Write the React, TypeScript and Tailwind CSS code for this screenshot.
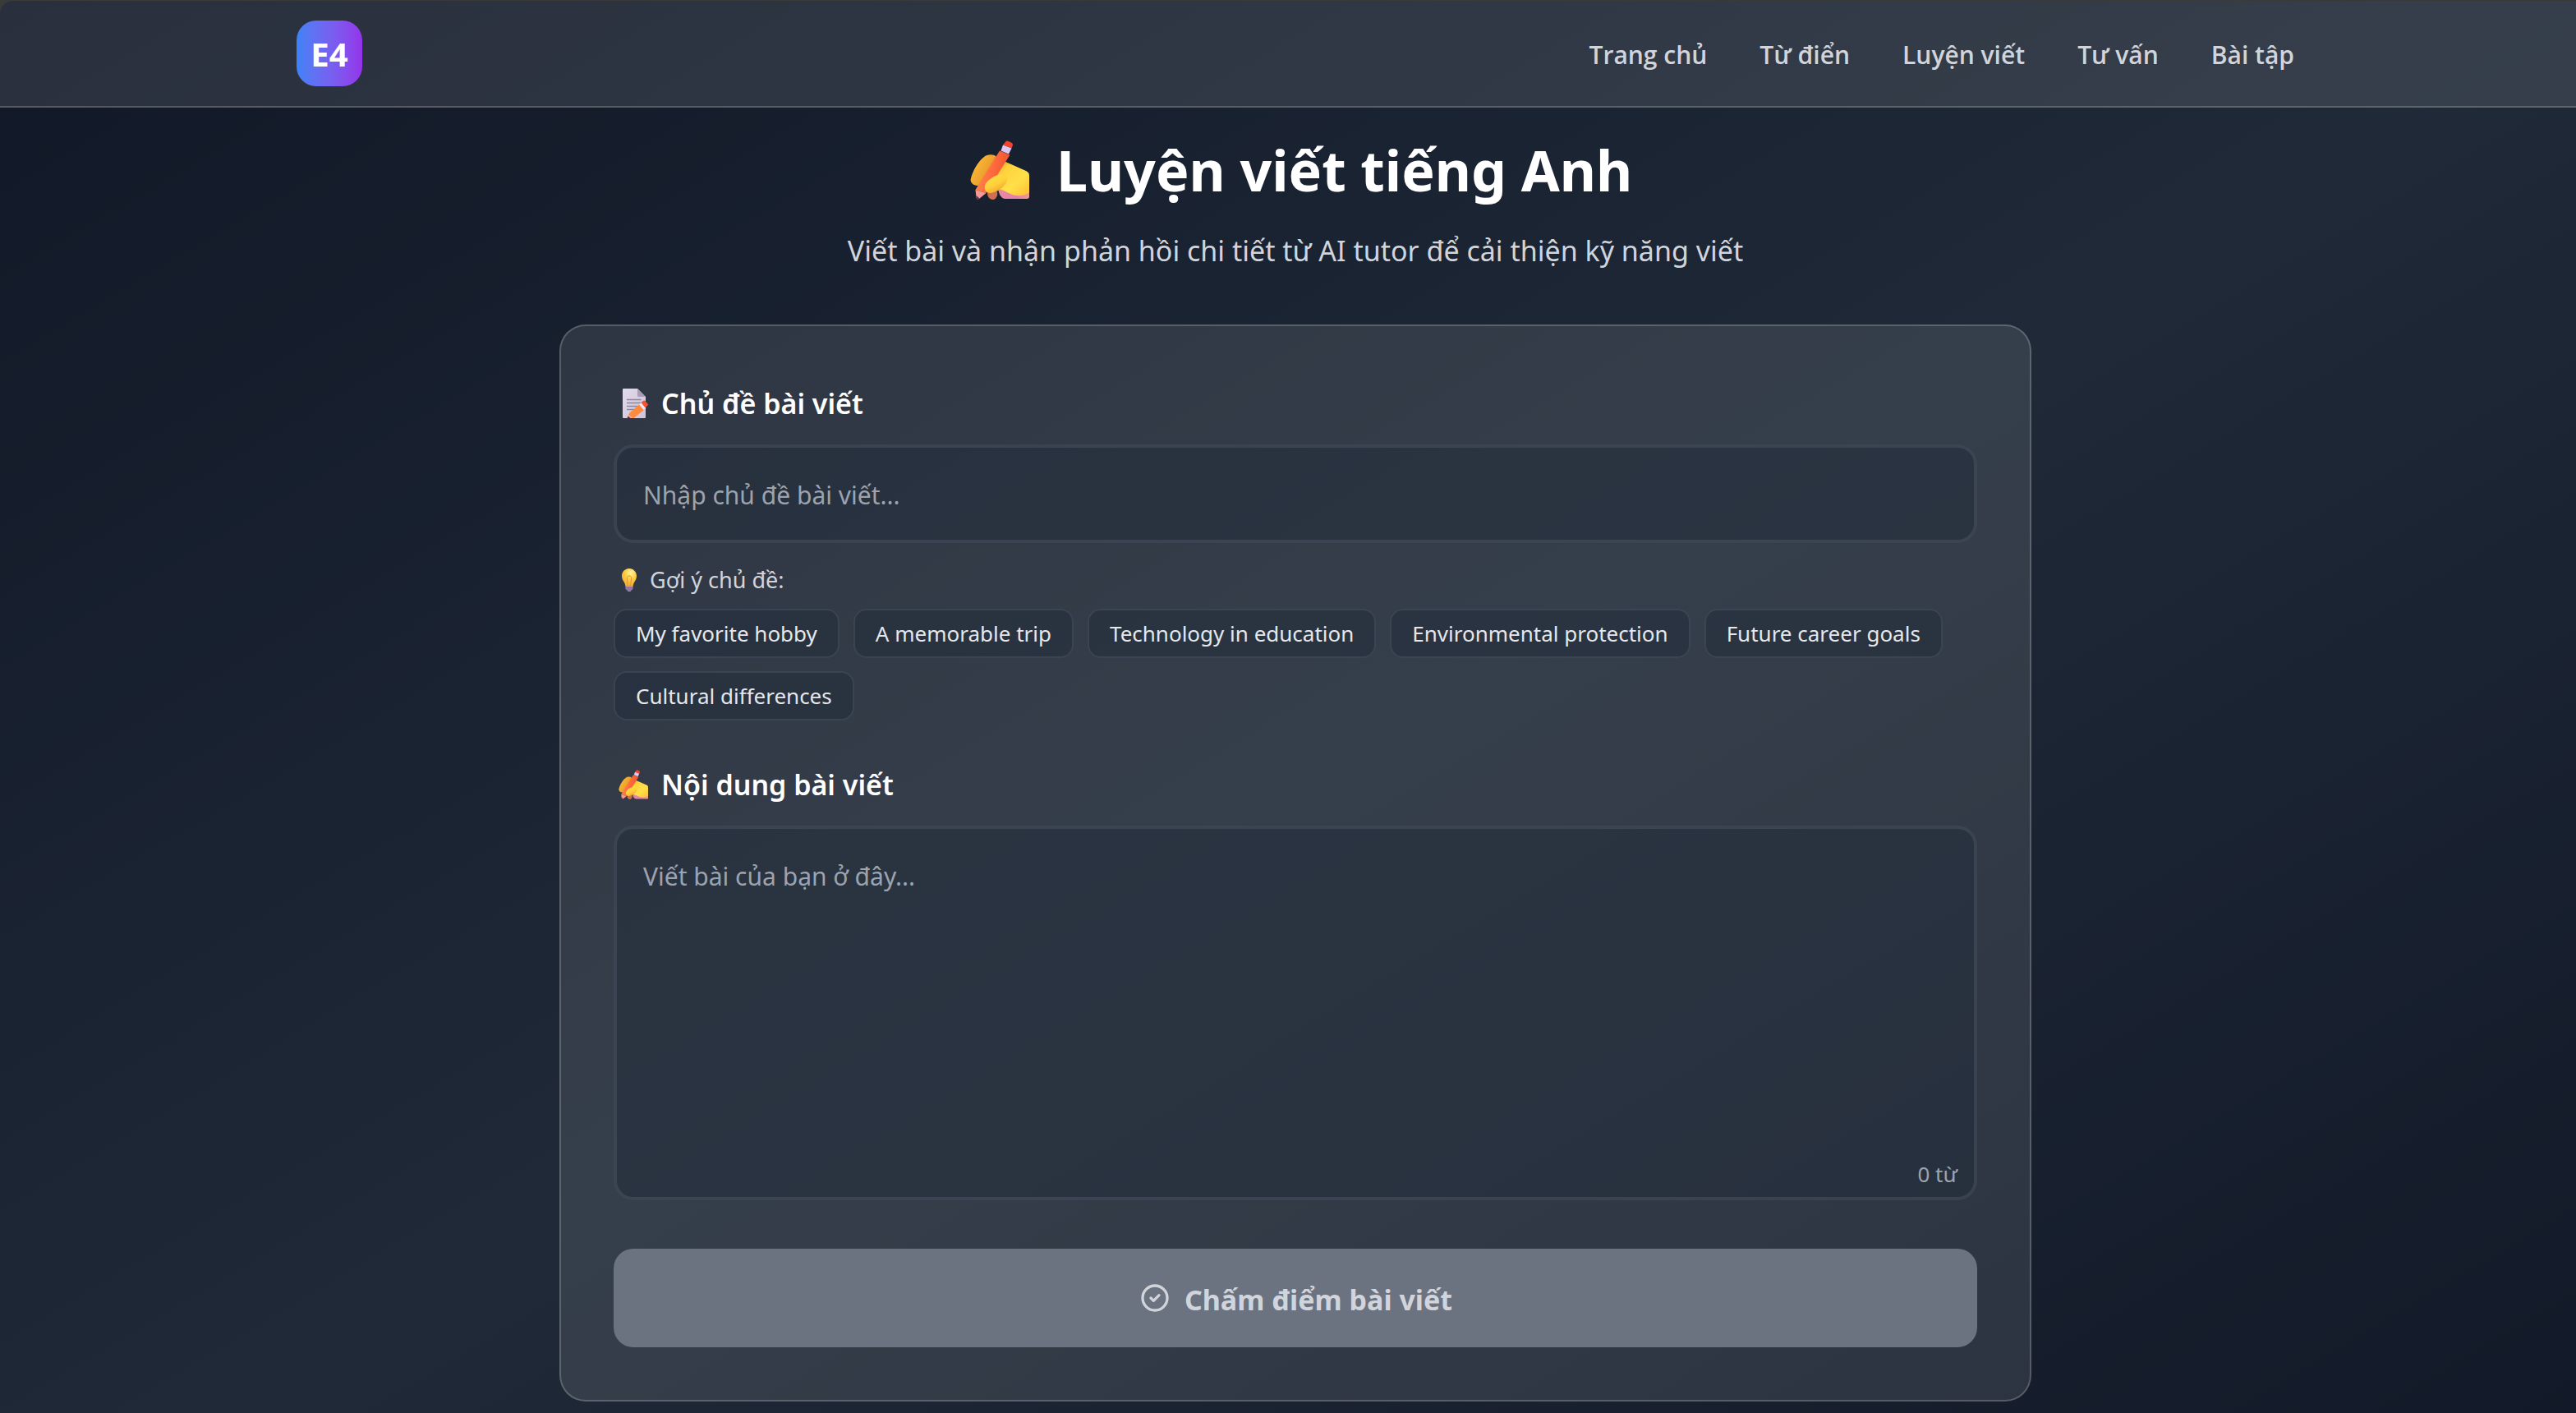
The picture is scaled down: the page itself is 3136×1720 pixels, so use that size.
import { useId, useState } from "react";

const NAV_LINKS = ["Trang chủ", "Từ điển", "Luyện viết", "Tư vấn", "Bài tập"];

const TOPICS = [
  "My favorite hobby",
  "A memorable trip",
  "Technology in education",
  "Environmental protection",
  "Future career goals",
  "Cultural differences",
];

function WritingHand({ className }: { className: string }) {
  const id = useId();
  return (
    <svg viewBox="0 0 72 72" className={className} aria-hidden="true">
      <defs>
        <linearGradient id={`${id}finger`} x1="0" y1="0" x2="1" y2="0.6">
          <stop offset="0" stopColor="#FFC83A" />
          <stop offset="0.6" stopColor="#EFA22E" />
          <stop offset="1" stopColor="#B8692F" />
        </linearGradient>
        <linearGradient id={`${id}palm`} x1="0" y1="0.2" x2="0.8" y2="1">
          <stop offset="0" stopColor="#C98A2B" />
          <stop offset="0.3" stopColor="#FFD23C" />
          <stop offset="0.7" stopColor="#FFE04A" />
          <stop offset="1" stopColor="#FFC83A" />
        </linearGradient>
        <linearGradient id={`${id}pink`} x1="0" y1="0" x2="1" y2="0">
          <stop offset="0" stopColor="#E98BA0" />
          <stop offset="0.6" stopColor="#E87FA8" />
          <stop offset="1" stopColor="#F39A8A" />
        </linearGradient>
        <linearGradient id={`${id}pencil`} x1="0" y1="0.4" x2="1" y2="0.6">
          <stop offset="0" stopColor="#FF8A4C" />
          <stop offset="0.5" stopColor="#FF6A3C" />
          <stop offset="1" stopColor="#E8502F" />
        </linearGradient>
        <linearGradient id={`${id}thumb`} x1="0" y1="0" x2="0.6" y2="1">
          <stop offset="0" stopColor="#FFE24A" />
          <stop offset="0.6" stopColor="#FFD03A" />
          <stop offset="1" stopColor="#F0A32C" />
        </linearGradient>
      </defs>
      <path
        d="M17 20c3-3 8-3.500 13-2l6 6-14 28-9 2c-7 3-14-2-12-8 2-8 8-20 16-26z"
        fill={`url(#${id}finger)`}
      />
      <path d="M21 64c0-3 3-5 7-5s6 4 5 8c-1 3-3 5-5.500 5-4 0-6.500-4-6.500-8z" fill="#CF6E50" />
      <path d="M34 56h38v12c0 2-1 3-3 3H43c-6 0-9-8-9-15z" fill={`url(#${id}pink)`} />
      <path
        d="M31 22l10 3 27 12c3 1.500 4 3 4 6v20c-7 6-18 5-25 1-8-4-14-6-22-8z"
        fill={`url(#${id}palm)`}
      />
      <path
        d="M36 12.500l12.500 5L19.500 64 6.500 60z"
        fill={`url(#${id}pencil)`}
      />
      <path d="M42.500 2.500C43.500 0 45 0 47 1l3 1.500c2 1 2.500 2.500 1.500 4.500l-1 2.500-10.500-4z" fill="#F2432C" />
      <path d="M40 5.500l10.500 4-3.500 7-9.500-4z" fill="#DDC8F5" />
      <path d="M6.500 60l13 4-8.500 7c-2 1-3.500 0-3.500-2z" fill="#F79A97" />
      <path d="M7.500 67l4 3.500-1.500 1c-1.500.5-2.500 0-2.500-1.500z" fill="#6B2B55" />
      <path
        d="M18 55c1-6 12-13 20-14 5-.5 9 3 7 8-3 8-12 14-20 15-5 .5-8-4-7-9z"
        fill={`url(#${id}thumb)`}
      />
    </svg>
  );
}

function MemoIcon({ className }: { className: string }) {
  const id = useId();
  return (
    <svg viewBox="0 0 32 36" className={className} aria-hidden="true">
      <defs>
        <linearGradient id={`${id}page`} x1="0" y1="0" x2="1" y2="1">
          <stop offset="0" stopColor="#E2DAE9" />
          <stop offset="1" stopColor="#CFC3DA" />
        </linearGradient>
        <clipPath id={`${id}clip`}>
          <rect width="32" height="36" />
        </clipPath>
      </defs>
      <g clipPath={`url(#${id}clip)`}>
        <path d="M2 0h17l10 10v24.500c0 1-.5 1.500-1.500 1.500h-25C1.500 36 1 35.500 1 34.500V1.500C1 .5 1.500 0 2 0z" fill={`url(#${id}page)`} />
        <path d="M19 0l10 10h-8c-1.500 0-2-.5-2-2z" fill="#A99DB8" />
        <path d="M6 13.500h17.500M6 17.500h17.500M6 21.500h13M6 25.500h10" stroke="#8D869B" strokeWidth="1.400" />
        <path d="M21.500 19l6 6.500L14.500 36 7 37l2-7z" fill="#FF8A3C" />
        <path d="M8.500 31.500l5 4.500-6.500 1z" fill="#F7A98C" />
        <path d="M7.500 33.500l3.500 3H6.500z" fill="#5B2148" />
        <path d="M21 19.500l2.500-2.500 6 6.500-3 2.500z" fill="#F1E6F5" />
        <path d="M23.500 17l2.500-2c1-.8 2-.5 2.500 0l3 3.500c.6 1 .5 1.800-.5 2.500l-2.500 2.200z" fill="#F4532F" />
      </g>
    </svg>
  );
}

function BulbIcon({ className }: { className: string }) {
  const id = useId();
  return (
    <svg viewBox="0 0 18 28" className={className} aria-hidden="true">
      <defs>
        <radialGradient id={`${id}glass`} cx="0.6" cy="0.25" r="0.8">
          <stop offset="0" stopColor="#FFF3A8" />
          <stop offset="0.4" stopColor="#FFD24A" />
          <stop offset="1" stopColor="#F2A52E" />
        </radialGradient>
      </defs>
      <path d="M9 0c5 0 9 4 9 9 0 3.500-1.500 5.500-3 8-.8 1.500-1.200 3-1.500 5h-9c-.3-2-.7-3.500-1.500-5-1.500-2.500-3-4.500-3-8 0-5 4-9 9-9z" fill={`url(#${id}glass)`} />
      <path d="M7.500 21.500L6.500 13c-.8-2.500.5-4 2.500-4s3.300 1.500 2.500 4l-1 8.500" fill="none" stroke="#E8912A" strokeWidth="1" />
      <path d="M4.500 21.500h9V24c0 1-1 2-2 2.500L10.500 28h-3l-1-1.500c-1-.5-2-1.500-2-2.500z" fill="#A58BB5" />
      <path d="M4.500 23.800h9M5.500 26h7" stroke="#6E5684" strokeWidth="0.800" />
    </svg>
  );
}

function CheckCircle() {
  return (
    <svg
      viewBox="0 0 24 24"
      fill="none"
      stroke="currentColor"
      strokeWidth="2"
      strokeLinecap="round"
      strokeLinejoin="round"
      className="size-10"
      aria-hidden="true"
    >
      <path d="M9 12l2 2 4-4m6 2a9 9 0 11-18 0 9 9 0 0118 0z" />
    </svg>
  );
}

const FIELD =
  "block w-full rounded-3xl border-4 border-[#4b5563]/50 bg-[#1f2937]/50 px-8 pt-[34px] pb-[30px] text-[30px] leading-[48px] text-white placeholder:text-[#9ca3af] outline-none";

export default function App() {
  const [topic, setTopic] = useState("");
  const [essay, setEssay] = useState("");
  const words = essay.trim() ? essay.trim().split(/\s+/).length : 0;
  const ready = topic.trim() !== "" && words > 0;

  return (
    <div className="min-h-screen bg-[#3a3a3a] pt-px font-['Noto_Sans','Open_Sans',sans-serif]">
      <div className="min-h-[calc(100vh-1px)] overflow-hidden rounded-tl-2xl bg-linear-to-br from-[#111827] via-[#1f2937] to-[#111827] bg-[length:101%_110%]">
        <header className="border-b-2 border-white/20 bg-white/10 pl-[18px]">
          <div className="mx-auto flex max-w-[2560px] items-center justify-between px-16 py-6">
            <a
              href="#"
              className="flex size-20 items-center justify-center rounded-3xl bg-linear-to-r from-[#3b82f6] to-[#9333ea] pt-0.5 text-[40px] leading-[56px] font-bold text-white"
            >
              E4
            </a>
            <nav className="flex gap-16 pt-1 font-['Open_Sans','Noto_Sans',sans-serif] text-[30px] leading-[48px] font-semibold text-[#d1d5db]">
              {NAV_LINKS.map((label) => (
                <a key={label} href="#">
                  {label}
                </a>
              ))}
            </nav>
          </div>
        </header>

        <main className="pt-[34px] pb-3 pl-[18px]">
          <div className="mx-auto max-w-[1792px]">
            <h1 className="mb-[27px] flex items-center justify-center text-[68px] leading-[84px] font-bold text-white">
              <WritingHand className="mr-[33px] ml-3.5 size-[72px]" />
              Luyện viết tiếng Anh
            </h1>
            <p className="mb-[61px] text-center text-[34px] leading-[58px] text-[#d1d5db]">
              Viết bài và nhận phản hồi chi tiết từ AI tutor để cải thiện kỹ năng viết
            </p>

            <form
              className="rounded-4xl border-2 border-white/20 bg-white/10 p-16"
              onSubmit={(e) => e.preventDefault()}
            >
              <label
                htmlFor="topic"
                className="mb-5 flex items-center text-[34px] leading-[60px] font-semibold text-white"
              >
                <MemoIcon className="mr-4 ml-2.5 h-9 w-8" />
                Chủ đề bài viết
              </label>
              <input
                id="topic"
                type="text"
                value={topic}
                onChange={(e) => setTopic(e.target.value)}
                placeholder="Nhập chủ đề bài viết..."
                className={FIELD}
              />

              <p className="mt-[25px] mb-[15px] flex items-center text-[27px] leading-[40px] text-[#d1d5db]">
                <BulbIcon className="mr-4 ml-2.5 h-7 w-[18px]" />
                Gợi ý chủ đề:
              </p>
              <div className="flex flex-wrap gap-x-[17px] gap-y-4">
                {TOPICS.map((name) => (
                  <button
                    key={name}
                    type="button"
                    onClick={() => setTopic(name)}
                    className="rounded-2xl border-2 border-[#4b5563]/50 bg-[#1f2937]/50 px-[25px] py-2 text-[26px] leading-[40px] text-[#e5e7eb]"
                  >
                    {name}
                  </button>
                ))}
              </div>

              <label
                htmlFor="essay"
                className="mt-12 mb-5 flex items-center text-[34px] leading-[60px] font-semibold text-white"
              >
                <WritingHand className="mr-4 ml-1.5 size-9" />
                Nội dung bài viết
              </label>
              <div className="relative">
                <textarea
                  id="essay"
                  rows={8}
                  value={essay}
                  onChange={(e) => setEssay(e.target.value)}
                  placeholder="Viết bài của bạn ở đây..."
                  className={`${FIELD} resize-none`}
                />
                <span className="absolute right-6 bottom-3 text-[26px] leading-[40px] text-[#9ca3af]">
                  {words} từ
                </span>
              </div>

              <button
                type="submit"
                disabled={!ready}
                className="mt-[59px] flex w-full items-center justify-center gap-4 rounded-3xl bg-[#6b7280] py-8 text-[34px] leading-[56px] font-bold text-[#d1d5db]"
              >
                <CheckCircle />
                <span className="pt-1 leading-[52px]">Chấm điểm bài viết</span>
              </button>
            </form>
          </div>
        </main>
      </div>
    </div>
  );
}
